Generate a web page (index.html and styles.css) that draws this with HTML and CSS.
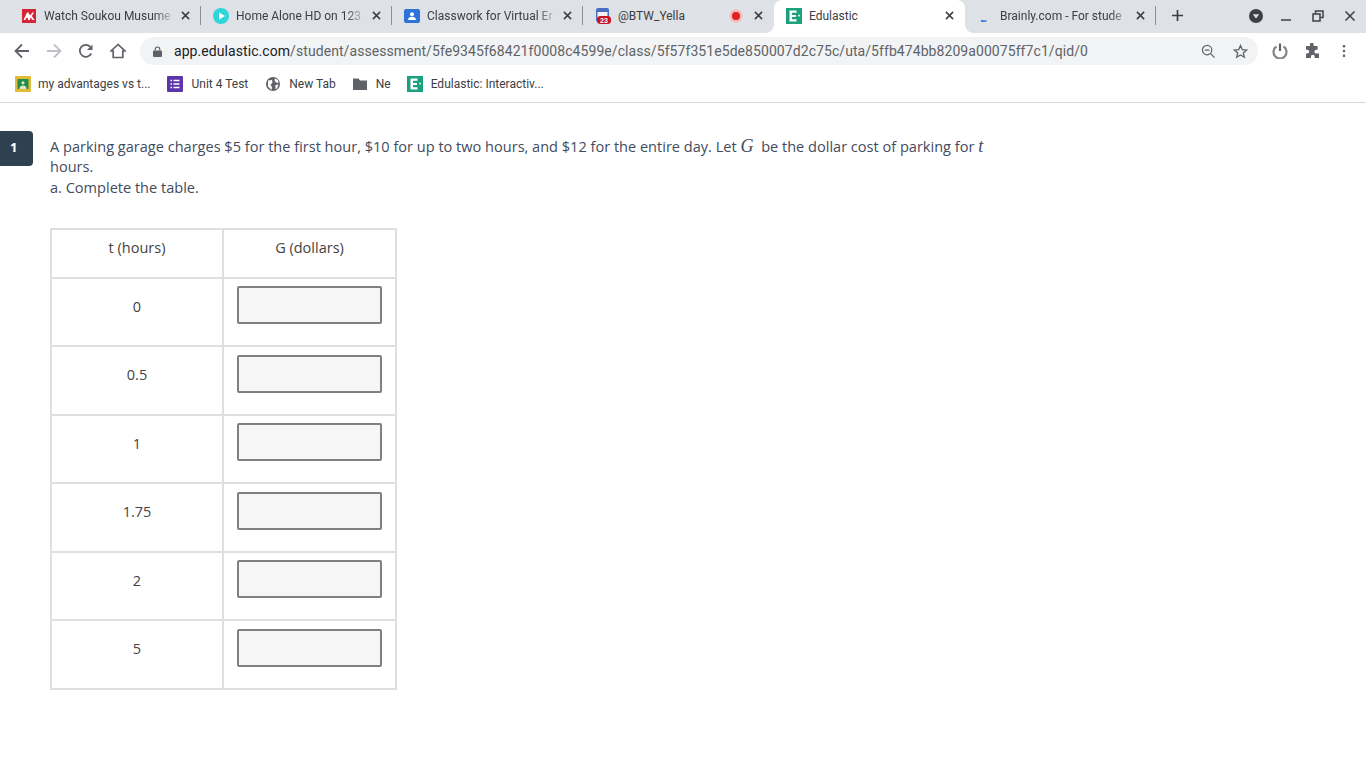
FILE: index.html
```html
<!DOCTYPE html>
<html lang="en">
<head>
<meta charset="UTF-8">
<meta name="viewport" content="width=device-width, initial-scale=1.0">
<title>Edulastic</title>
<link rel="stylesheet" href="styles.css">
</head>
<body>

<div class="browser">
    <div class="tabstrip">
        <div class="tab sep">
            <svg class="favicon" viewBox="0 0 16 16"><rect x="1" y="1" width="14" height="14" fill="#d32536"/><path d="M2.500 12 6 4.500h1.500L9 7.500 11.500 4.500h1.500L10.800 8 13.500 12h-2L9.500 9.500 8.800 12H7.200L6.800 10H5.200L4.300 12z" fill="#fff"/></svg>
            <span class="tabtitle">Watch Soukou Musume</span>
            <svg class="tabclose" viewBox="0 0 10 10"><path d="M1 1 9 9M9 1 1 9"/></svg>
        </div>
        <div class="tab sep">
            <svg class="favicon" viewBox="0 0 16 16"><circle cx="8" cy="8" r="8" fill="#2fd5d8"/><path d="M6 4.500 12 8 6 11.500z" fill="#fff"/></svg>
            <span class="tabtitle">Home Alone HD on 123</span>
            <svg class="tabclose" viewBox="0 0 10 10"><path d="M1 1 9 9M9 1 1 9"/></svg>
        </div>
        <div class="tab sep">
            <svg class="favicon" viewBox="0 0 16 16"><rect y="1" width="16" height="14" rx="2" fill="#2f73d8"/><circle cx="8" cy="6.300" r="2" fill="#fff"/><path d="M4 12c0-2.400 2-3.200 4-3.200s4 .8 4 3.200z" fill="#fff"/></svg>
            <span class="tabtitle">Classwork for Virtual Er</span>
            <svg class="tabclose" viewBox="0 0 10 10"><path d="M1 1 9 9M9 1 1 9"/></svg>
        </div>
        <div class="tab">
            <svg class="favicon" viewBox="0 0 16 16"><rect x="1" width="13" height="14" rx="2" fill="#4a6fc0"/><rect x="2.500" y="4" width="10" height="6" fill="#f3f3f3"/><rect x="2" y="8" width="14" height="8" rx="3.500" fill="#c8141e"/><text class="badge" x="9" y="14.800">23</text></svg>
            <span class="tabtitle tabtitle-plain">@BTW_Yella</span>
            <svg class="recdot" viewBox="0 0 14 14"><circle cx="7" cy="7" r="6.500" fill="#f6b9b5"/><circle cx="7" cy="7" r="4" fill="#d9211f"/></svg>
            <svg class="tabclose" viewBox="0 0 10 10"><path d="M1 1 9 9M9 1 1 9"/></svg>
        </div>
        <div class="tab active">
            <svg class="favicon" viewBox="0 0 16 16"><rect width="16" height="16" fill="#1ba17e"/><path d="M3.500 2.500h7v2.300H6v2.100h4v2.200H6v2.100h4.500v2.300h-7z" fill="#fff"/><rect x="12.300" y="6.800" width="1.600" height="1.600" fill="#fff"/></svg>
            <span class="tabtitle tabtitle-plain">Edulastic</span>
            <svg class="tabclose" viewBox="0 0 10 10"><path d="M1 1 9 9M9 1 1 9"/></svg>
        </div>
        <div class="tab sep">
            <svg class="favicon" viewBox="0 0 16 16"><path d="M4 12.500c2 1 4 1 5.500 0" stroke="#2a6fdc" stroke-width="1.500" fill="none"/></svg>
            <span class="tabtitle">Brainly.com - For stude</span>
            <svg class="tabclose" viewBox="0 0 10 10"><path d="M1 1 9 9M9 1 1 9"/></svg>
        </div>
        <svg class="newtab" viewBox="0 0 14 14"><path d="M7 1v12M1 7h12"/></svg>
        <div class="stripright">
            <svg class="tabsearch" viewBox="0 0 14 14"><circle cx="7" cy="7" r="7" fill="#3c4043"/><path d="M3.800 5.200h6.400L7 9.500z" fill="#dee1e6"/></svg>
            <svg class="winbtn" viewBox="0 0 12 12"><path d="M1 10h10" stroke="#3c4043" stroke-width="1.500"/></svg>
            <svg class="winbtn" viewBox="0 0 12 12"><path d="M3.500 3.500V1h7.500v6.500H8.500" fill="none" stroke="#3c4043" stroke-width="1.500"/><rect x="1" y="4" width="7" height="7" fill="none" stroke="#3c4043" stroke-width="1.500"/></svg>
            <svg class="winbtn" viewBox="0 0 12 12"><path d="M1.500 1.500l9 9M10.500 1.500l-9 9" stroke="#3c4043" stroke-width="1.500"/></svg>
        </div>
    </div>

    <div class="toolbar">
        <svg class="navicon" viewBox="0 0 16 16"><path d="M15 8H2M8 1.500 1.500 8 8 14.500" fill="none" stroke="#5f6368" stroke-width="1.800"/></svg>
        <svg class="navicon" viewBox="0 0 16 16"><path d="M1 8h13M8 1.500 14.500 8 8 14.500" fill="none" stroke="#bdc1c6" stroke-width="1.800"/></svg>
        <svg class="navicon" viewBox="0 0 16 16"><path d="M13.200 10.500A6 6 0 1 1 12.300 3.800" fill="none" stroke="#5f6368" stroke-width="1.800"/><path d="M14.500 1.500v5.500H9z" fill="#5f6368"/></svg>
        <svg class="navicon" viewBox="0 0 16 16"><path d="M8 1.500 1 8h2.200v6.500h9.600V8H15z" fill="none" stroke="#5f6368" stroke-width="1.700"/></svg>
        <div class="omnibox">
            <svg class="lock" viewBox="0 0 10 12"><path d="M2.500 5V3.500a2.500 2.500 0 0 1 5 0V5" fill="none" stroke="#5f6368" stroke-width="1.300"/><rect y="5" width="10" height="7" rx="1" fill="#5f6368"/></svg>
            <span class="url"><span class="host">app.edulastic.com</span>/student/assessment/5fe9345f68421f0008c4599e/class/5f57f351e5de850007d2c75c/uta/5ffb474bb8209a00075ff7c1/qid/0</span>
            <svg class="omniicon zoomicon" viewBox="0 0 16 16"><circle cx="6.500" cy="6.500" r="5" fill="none" stroke="#5f6368" stroke-width="1.300"/><path d="M4 6.500h5M10.200 10.200 14.500 14.500" stroke="#5f6368" stroke-width="1.300"/></svg>
            <svg class="omniicon" viewBox="0 0 16 16"><path d="M8 1.600 9.900 6l4.700.4-3.600 3.100 1.100 4.600L8 11.700l-4.100 2.400L5 9.500 1.400 6.400 6.100 6z" fill="none" stroke="#5f6368" stroke-width="1.400"/></svg>
        </div>
        <div class="toolright">
            <svg class="extpower" viewBox="0 0 16 16"><path d="M4.500 3.500a6.500 6.500 0 1 0 7 0" fill="none" stroke="#80868b" stroke-width="2.200"/><path d="M8 0.500v7.500" stroke="#5f6368" stroke-width="2.200"/></svg>
            <svg class="extpuzzle" viewBox="0 0 16 16"><path d="M6 1.500a1.800 1.800 0 0 1 3.600 0V3h4v3.800h-1.300a1.900 1.900 0 0 0 0 3.800H15V15h-4.300v-1.300a1.900 1.900 0 0 0-3.800 0V15H2V10.500H3.300a1.900 1.900 0 0 0 0-3.800H2V3h4z" fill="#5f6368"/></svg>
            <svg class="kebab" viewBox="0 0 4 16"><circle cx="2" cy="2.500" r="1.500" fill="#5f6368"/><circle cx="2" cy="8" r="1.500" fill="#5f6368"/><circle cx="2" cy="13.500" r="1.500" fill="#5f6368"/></svg>
        </div>
    </div>

    <div class="bookmarks">
        <div class="bm bm-first">
            <svg class="bmicon" viewBox="0 0 16 16"><rect width="16" height="16" rx="1" fill="#e3b93a"/><rect x="2.500" y="3" width="11" height="10" fill="#1f8e4d"/><circle cx="8" cy="6.800" r="1.600" fill="#e3e3c8"/><path d="M4.500 13c0-2.500 1.500-3.500 3.500-3.500s3.500 1 3.500 3.500z" fill="#e3e3c8"/></svg>
            <span>my advantages vs t...</span>
        </div>
        <div class="bm">
            <svg class="bmicon" viewBox="0 0 16 16"><rect width="16" height="16" rx="1" fill="#5d35a8"/><path d="M3.500 4.500h1.500M6.500 4.500h6M3.500 8h1.500M6.500 8h6M3.500 11.500h1.500M6.500 11.500h6" stroke="#fff" stroke-width="1.500"/></svg>
            <span>Unit 4 Test</span>
        </div>
        <div class="bm">
            <svg class="bmicon" viewBox="0 0 16 16"><circle cx="8" cy="8" r="7" fill="#5f6368"/><path d="M3 4.500 7 4l.5 2.500L5.500 9 7 11 6.500 14 3 10.500zM10 2.500l3 1.500.5 3-2.500-.5-1.500-2zM10.500 9l3-.5-1.500 4-1.500.5z" fill="#fff"/></svg>
            <span>New Tab</span>
        </div>
        <div class="bm">
            <svg class="bmicon" viewBox="0 0 16 16"><path d="M1 2.500h5.500L8 4.500h7V14H1z" fill="#5f6368"/></svg>
            <span>Ne</span>
        </div>
        <div class="bm">
            <svg class="bmicon" viewBox="0 0 16 16"><rect width="16" height="16" fill="#1ba17e"/><path d="M3.500 2.500h7v2.300H6v2.100h4v2.200H6v2.100h4.500v2.300h-7z" fill="#fff"/><rect x="12.300" y="6.800" width="1.600" height="1.600" fill="#fff"/></svg>
            <span>Edulastic: Interactiv...</span>
        </div>
    </div>
</div>

<div class="question">
    <div class="qnumber">1</div>
    <div class="qbody">
        <p class="stem">A parking garage charges $5 for the first hour, $10 for up to two hours, and $12 for the entire day. Let <span class="math mathg">G</span> be the dollar cost of parking for <span class="math">t</span> hours.<br>a. Complete the table.</p>
        <table class="answers">
            <tr class="headrow"><th>t (hours)</th><th>G (dollars)</th></tr>
            <tr><td>0</td><td><input class="answer" type="text"></td></tr>
            <tr><td>0.5</td><td><input class="answer" type="text"></td></tr>
            <tr><td>1</td><td><input class="answer" type="text"></td></tr>
            <tr><td>1.75</td><td><input class="answer" type="text"></td></tr>
            <tr><td>2</td><td><input class="answer" type="text"></td></tr>
            <tr><td>5</td><td><input class="answer" type="text"></td></tr>
        </table>
    </div>
</div>

</body>
</html>
```

FILE: styles.css
```css
html, body {
    margin: 0;
    height: 100%;
    overflow: hidden;
    background-color: #fff;
}

.browser {
    font-family: Roboto, "Liberation Sans", sans-serif;
    color: #3c4043;
}

.tabstrip {
    display: flex;
    align-items: center;
    height: 33px;
    padding-left: 10px;
    background-color: #dee1e6;
}

.tab {
    display: flex;
    align-items: center;
    box-sizing: border-box;
    width: 191px;
    height: 33px;
    padding: 0 11px 2px 12px;
    position: relative;
    font-size: 12px;
}

.tab:first-child {
    padding-left: 11px;
}

.tab.sep::after {
    content: "";
    position: absolute;
    right: 0;
    top: 6px;
    width: 1px;
    height: 19px;
    background-color: #8b8e92;
}

.tab.active {
    background-color: #fff;
    border-radius: 8px 8px 0 0;
}

.tab.active::before, .tab.active::after {
    content: "";
    position: absolute;
    bottom: 0;
    width: 8px;
    height: 8px;
}

.tab.active::before {
    left: -8px;
    background: radial-gradient(circle at 0 0, #dee1e6 7.5px, #fff 8px);
}

.tab.active::after {
    right: -8px;
    background: radial-gradient(circle at 100% 0, #dee1e6 7.5px, #fff 8px);
}

.favicon {
    width: 16px;
    height: 16px;
    flex: none;
    margin-right: 7px;
}

.badge {
    font-family: "Liberation Sans", sans-serif;
    font-size: 7px;
    font-weight: 700;
    fill: #fff;
    text-anchor: middle;
}

.tabtitle {
    flex: 1;
    overflow: hidden;
    white-space: nowrap;
    -webkit-mask-image: linear-gradient(to right, #000 85%, transparent 100%);
    mask-image: linear-gradient(to right, #000 85%, transparent 100%);
}

.tabtitle-plain {
    -webkit-mask-image: none;
    mask-image: none;
}

.recdot {
    width: 14px;
    height: 14px;
    flex: none;
    margin-right: 5px;
}

.tabclose {
    width: 9px;
    height: 9px;
    flex: none;
    margin-left: 6px;
    fill: none;
    stroke: #3c4043;
    stroke-width: 1.700;
}

.newtab {
    width: 13px;
    height: 13px;
    margin-left: 15px;
    margin-bottom: 2px;
    fill: none;
    stroke: #3c4043;
    stroke-width: 1.800;
}

.stripright {
    display: flex;
    align-items: center;
    margin-left: auto;
    padding-right: 10px;
    padding-bottom: 2px;
}

.tabsearch {
    width: 14px;
    height: 14px;
}

.winbtn {
    width: 12px;
    height: 12px;
    margin-left: 20px;
}

.tabsearch + .winbtn {
    margin-left: 17px;
}

.toolbar {
    display: flex;
    align-items: center;
    height: 36px;
    padding-left: 14px;
}

.navicon {
    width: 16px;
    height: 16px;
    flex: none;
    margin-right: 16px;
}

.omnibox {
    display: flex;
    align-items: center;
    box-sizing: border-box;
    width: 1118px;
    height: 28px;
    margin-left: -2px;
    padding: 0 10px 0 13px;
    border-radius: 14px;
    background-color: #f1f3f4;
}

.lock {
    width: 9px;
    height: 11px;
    flex: none;
    margin-right: 12px;
}

.url {
    flex: 1;
    font-size: 14px;
    letter-spacing: 0.07px;
    color: #5f6368;
    white-space: nowrap;
}

.host {
    color: #202124;
}

.omniicon {
    width: 15px;
    height: 15px;
    flex: none;
    margin-left: 17px;
}

.toolright {
    display: flex;
    align-items: center;
    margin-left: 14px;
}

.extpower {
    width: 16px;
    height: 16px;
    margin-right: 16px;
}

.extpuzzle {
    width: 16px;
    height: 16px;
    margin-right: 22px;
}

.kebab {
    width: 4px;
    height: 14px;
}

.bookmarks {
    display: flex;
    align-items: center;
    box-sizing: border-box;
    height: 34px;
    padding: 0 0 3px 15px;
    border-bottom: 1px solid #d5d7da;
    font-size: 12px;
}

.bm {
    display: flex;
    align-items: center;
    margin-right: 16px;
}

.bm-first, .bm-first + .bm {
    margin-right: 17px;
}

.bmicon {
    width: 16px;
    height: 16px;
    flex: none;
    margin-right: 8px;
}

.bm-first .bmicon {
    margin-right: 7px;
}

.question {
    display: flex;
    padding-top: 28px;
    font-family: "Open Sans", sans-serif;
    color: #434b5d;
}

.qnumber {
    flex: none;
    box-sizing: border-box;
    width: 33px;
    height: 35px;
    padding-top: 7px;
    padding-left: 10px;
    border-radius: 0 4px 4px 0;
    background-color: #2f4151;
    color: #fff;
    font-size: 13px;
    font-weight: 700;
    line-height: 18px;
}

.qbody {
    margin-left: 17px;
}

.stem {
    width: 945px;
    margin: 4.500px 0 0;
    font-size: 14.550px;
    line-height: 20.500px;
}

.math {
    font-family: "Liberation Serif", serif;
    font-style: italic;
    font-size: 18px;
    line-height: 0;
}

.mathg {
    margin-right: 4px;
}

.answers {
    margin-top: 30.500px;
    border-collapse: collapse;
    border: 2px solid #dfdfdf;
    font-size: 14.500px;
    color: #434343;
}

.answers th, .answers td {
    box-sizing: border-box;
    width: 172px;
    height: 68.500px;
    padding: 0;
    border: 2px solid #dfdfdf;
    text-align: center;
    vertical-align: top;
    font-weight: 400;
}

.answers th:last-child, .answers td:last-child {
    width: 173px;
}

.answers td {
    padding-top: 7.500px;
}

.answers td:first-child {
    padding-top: 18px;
}

.answers .headrow th {
    height: 49px;
    padding-top: 8px;
}

.answer {
    display: block;
    box-sizing: border-box;
    width: 145px;
    height: 38px;
    margin: 0 auto;
    border: 2px solid #808080;
    border-radius: 2px;
    background-color: #f6f6f6;
}
```
